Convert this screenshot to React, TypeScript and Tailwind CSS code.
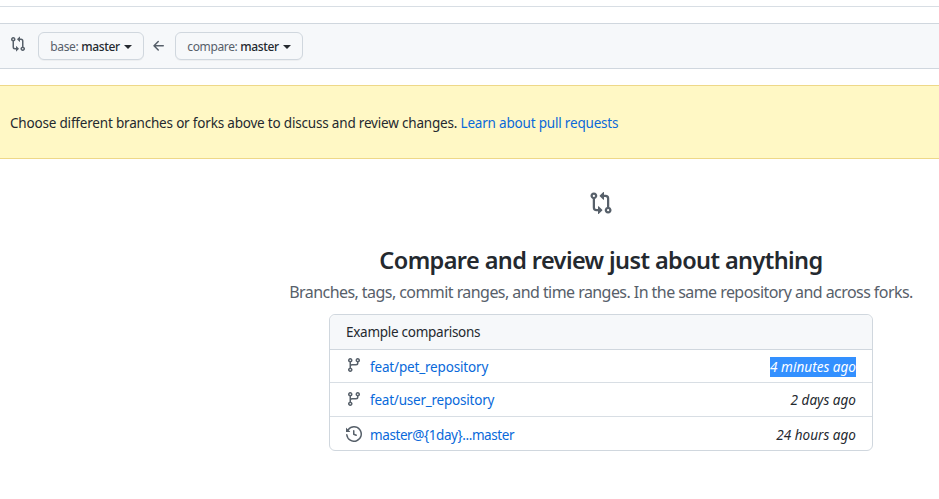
const font = "[font-family:'Noto_Sans',sans-serif]";

const COMPARE =
  'M9.573.677A.25.25 0 0 1 10 .854V2.5h1A2.5 2.5 0 0 1 13.5 5v5.628a2.251 2.251 0 1 1-1.5 0V5a1 1 0 0 0-1-1h-1v1.646a.25.25 0 0 1-.427.177L7.177 3.427a.25.25 0 0 1 0-.354ZM6 12v-1.646a.25.25 0 0 1 .427-.177l2.396 2.396a.25.25 0 0 1 0 .354l-2.396 2.396A.25.25 0 0 1 6 15.146V13.5H5A2.5 2.5 0 0 1 2.5 11V5.372a2.25 2.25 0 1 1 1.5 0V11a1 1 0 0 0 1 1ZM4 3.25a.75.75 0 1 0-1.5 0 .75.75 0 0 0 1.5 0ZM12.75 12a.75.75 0 1 0 0 1.5.75.75 0 0 0 0-1.5Z';
const BRANCH =
  'M9.5 3.25a2.25 2.25 0 1 1 3 2.122V6A2.5 2.5 0 0 1 10 8.5H6a1 1 0 0 0-1 1v1.128a2.251 2.251 0 1 1-1.5 0V5.372a2.25 2.25 0 1 1 1.5 0v1.836A2.493 2.493 0 0 1 6 7h4a1 1 0 0 0 1-1v-.628A2.25 2.25 0 0 1 9.5 3.25Zm-6 0a.75.75 0 1 0 1.5 0 .75.75 0 0 0-1.5 0Zm8.25-.75a.75.75 0 1 0 0 1.5.75.75 0 0 0 0-1.5ZM4.25 12a.75.75 0 1 0 0 1.5.75.75 0 0 0 0-1.5Z';
const HISTORY =
  'm.427 1.927 1.215 1.215a8.002 8.002 0 1 1-1.6 5.685.75.75 0 1 1 1.493-.154 6.5 6.5 0 1 0 1.18-4.458l1.358 1.358A.25.25 0 0 1 3.896 6H.25A.25.25 0 0 1 0 5.75V2.104a.25.25 0 0 1 .427-.177ZM7.75 4a.75.75 0 0 1 .75.75v2.992l2.028.812a.75.75 0 0 1-.557 1.392l-2.5-1A.751.751 0 0 1 7 8.25v-3.5A.75.75 0 0 1 7.75 4Z';
const ARROW_LEFT =
  'M7.78 12.53a.75.75 0 0 1-1.06 0L2.47 8.28a.75.75 0 0 1 0-1.06l4.25-4.25a.751.751 0 0 1 1.042.018.751.751 0 0 1 .018 1.042L4.81 7h7.44a.75.75 0 0 1 0 1.5H4.81l2.97 2.97a.75.75 0 0 1 0 1.06Z';

function Octicon({ d, className }: { d: string; className: string }) {
  return (
    <svg viewBox="0 0 16 16" fill="currentColor" className={className} aria-hidden="true">
      <path d={d} />
    </svg>
  );
}

function RangeButton({ label, width }: { label: string; width: string }) {
  return (
    <button
      className={`flex h-[28px] items-center justify-center gap-[4px] rounded-md border border-[#d0d7de] bg-[#f6f8fa] text-[12px] tracking-[-0.35px] text-[#57606a] shadow-[0_1px_0_rgba(27,31,36,0.04)] ${width}`}
    >
      <span className="mt-[2px]">
        {label}: <span className="font-medium text-[#24292f]">master</span>
      </span>
      <span className="mt-[1px] border-x-[4px] border-t-[4px] border-x-transparent border-t-[#24292f]" />
    </button>
  );
}

const rows = [
  { icon: BRANCH, iconClass: 'mb-[2px]', rowClass: 'h-[33px] border-b', textClass: 'mt-[2px]', nameClass: 'tracking-[-0.17px]', name: 'feat/pet_repository', time: '4 minutes ago', selected: true },
  { icon: BRANCH, iconClass: 'mb-[2px]', rowClass: 'h-[34px] border-b', textClass: 'mt-[2px]', nameClass: 'tracking-[-0.22px]', name: 'feat/user_repository', time: '2 days ago', selected: false },
  { icon: HISTORY, iconClass: '', rowClass: 'h-[33px]', textClass: 'mt-[3px]', nameClass: 'tracking-[-0.41px]', name: 'master@{1day}...master', time: '24 hours ago', selected: false },
];

export default function App() {
  return (
    <div className={`h-[499px] w-[939px] overflow-hidden bg-white text-[#24292f] ${font}`}>
      <div className="mt-[6px] h-[17px] border-t border-[#d8dee4]" />

      {/* Compare bar */}
      <div className="flex h-[46px] items-center border-y border-[#d0d7de] bg-[#f6f8fa] pl-[10px]">
        <Octicon d={COMPARE} className="mb-[4px] size-[16px] text-[#57606a]" />
        <div className="ml-[12px] flex items-center">
          <RangeButton label="base" width="w-[106px]" />
          <Octicon d={ARROW_LEFT} className="mr-[8px] ml-[7px] size-[16px] text-[#57606a]" />
          <RangeButton label="compare" width="w-[128px]" />
        </div>
      </div>

      {/* Flash */}
      <div className="mt-[16px] flex h-[74px] items-center border-y border-[#eed888] bg-[#fff8c5] pt-[3px] pl-[10px] text-[13.5px] tracking-[-0.19px] text-[#24292f]">
        <p>
          Choose different branches or forks above to discuss and review changes.{' '}
          <a className="text-[#0969da]">Learn about pull requests</a>
        </p>
      </div>

      {/* Blankslate */}
      <div className="flex w-[939px] flex-col items-center pt-[32px] pl-[263px]">
        <Octicon d={COMPARE} className="size-[24px] text-[#57606a]" />
        <h2 className="mt-[29px] text-[23.5px] leading-[32px] font-semibold tracking-[-0.6px] whitespace-nowrap text-[#24292f]">
          Compare and review just about anything
        </h2>
        <p className="mt-[4px] text-[16px] leading-[24px] tracking-[-0.56px] whitespace-nowrap text-[#57606a]">
          Branches, tags, commit ranges, and time ranges. In the same repository and across forks.
        </p>

        <div className="mt-[10px] w-[544px] rounded-md border border-[#d0d7de] text-[13.5px]">
          <div className="flex h-[35px] items-center rounded-t-md border-b border-[#d0d7de] bg-[#f6f8fa] px-[16px] tracking-[-0.27px]">
            Example comparisons
          </div>
          {rows.map((row) => (
            <div key={row.name} className={`flex items-center border-[#d8dee4] px-[16px] ${row.rowClass}`}>
              <Octicon d={row.icon} className={`mr-[8px] size-[16px] text-[#57606a] ${row.iconClass}`} />
              <a className={`text-[#0969da] ${row.textClass} ${row.nameClass}`}>{row.name}</a>
              <span
                className={`ml-auto italic tracking-[0.03px] ${row.textClass} ${row.selected ? 'bg-[#3390ff] text-white' : ''}`}
              >
                {row.time}
              </span>
            </div>
          ))}
        </div>
      </div>
    </div>
  );
}
